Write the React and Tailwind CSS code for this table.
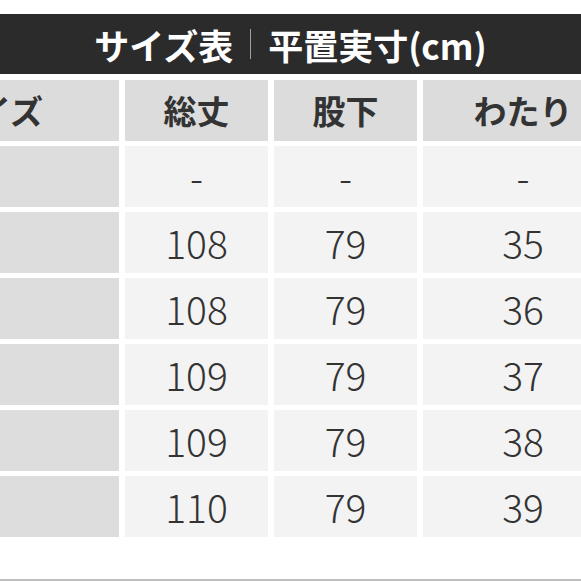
const headers = ['サイズ', '総丈', '股下', 'わたり']

const rows = [
  ['', '-', '-', '-'],
  ['', '108', '79', '35'],
  ['', '108', '79', '36'],
  ['', '109', '79', '37'],
  ['', '109', '79', '38'],
  ['', '110', '79', '39'],
]

const jp = { fontFamily: '"Noto Sans CJK JP", "Noto Sans", sans-serif' }

export default function App() {
  return (
    <div
      className="w-[581px] h-[581px] bg-white overflow-hidden border-b-2 border-[#bdbdbd] pt-[14px]"
      style={jp}
    >
      <div className="h-[60px] bg-[#2b2b2b] flex items-center justify-center text-white text-[35px] font-bold leading-none">
        <span>サイズ表</span>
        <span className="w-px h-[30px] bg-[#a0a0a0] mx-[17px]" />
        <span>平置実寸(cm)</span>
      </div>

      <div className="mt-[6px] ml-[-131px] w-[748px] grid grid-cols-[250px_143px_143px_200px] auto-rows-[61px] gap-x-[6px] gap-y-[5px]">
        {headers.map(h => (
          <div
            key={h}
            className="bg-[#dcdcdc] flex items-center justify-center text-[33px] font-bold text-[#333333]"
          >
            {h}
          </div>
        ))}
        {rows.map((row, i) =>
          row.map((cell, j) => (
            <div
              key={i + '-' + j}
              className={
                j === 0
                  ? 'bg-[#dddddd]'
                  : 'bg-[#f3f3f3] flex items-center justify-center text-[39px] font-light text-[#333333]'
              }
            >
              {cell}
            </div>
          ))
        )}
      </div>
    </div>
  )
}
